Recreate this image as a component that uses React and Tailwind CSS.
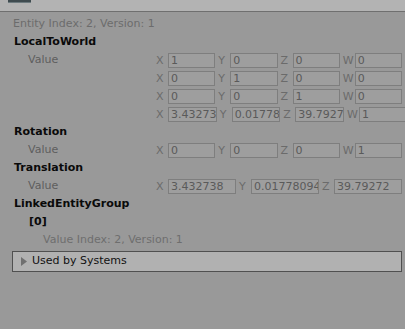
import React from "react";

const font = { fontFamily: '"DejaVu Sans", Verdana, sans-serif' };

function Field({ label, value }) {
  return (
    <div className="flex flex-1 items-center min-w-0">
      <div className="w-[12px] shrink-0 text-[#6b6b6b] leading-none">{label}</div>
      <div className="flex-1 min-w-0 h-[15px] border border-[#7e7e7e] bg-[#9e9e9e] text-[#5a5a5a] pl-[2px] overflow-hidden whitespace-nowrap leading-[13px]">
        {value}
      </div>
    </div>
  );
}

function FieldRow({ label, values }) {
  const names = ["X", "Y", "Z", "W"];
  return (
    <div className="flex h-[18px] items-center">
      <div className="w-[156px] shrink-0 pl-[28px] text-[#5e5e5e]">{label}</div>
      <div className="flex flex-1 gap-[3px] pr-[3px]">
        {values.map((v, i) => (
          <Field key={i} label={names[i]} value={v} />
        ))}
      </div>
    </div>
  );
}

function Row({ children, className = "" }) {
  return <div className={"flex h-[18px] items-center whitespace-nowrap " + className}>{children}</div>;
}

export default function App() {
  return (
    <div className="min-h-screen w-full bg-[#999999] text-[11px]" style={font}>
      <div className="h-[12px] bg-[#b3b3b3] border-b border-[#6f6f6f]">
        <div className="ml-[8px] w-[23px] h-[3px] bg-[#3f4b4f] border-b border-[#6d7a7e]" />
      </div>
      <div className="pt-[3px]">
        <Row className="pl-[13px] text-[#6c6c6c]">Entity Index: 2, Version: 1</Row>
        <Row className="pl-[14px] font-bold text-[#0a0a0a]">LocalToWorld</Row>
        <FieldRow label="Value" values={["1", "0", "0", "0"]} />
        <FieldRow label="" values={["0", "1", "0", "0"]} />
        <FieldRow label="" values={["0", "0", "1", "0"]} />
        <FieldRow label="" values={["3.432738", "0.01778094", "39.79272", "1"]} />
        <Row className="pl-[14px] font-bold text-[#0a0a0a]">Rotation</Row>
        <FieldRow label="Value" values={["0", "0", "0", "1"]} />
        <Row className="pl-[14px] font-bold text-[#0a0a0a]">Translation</Row>
        <FieldRow label="Value" values={["3.432738", "0.01778094", "39.79272"]} />
        <Row className="pl-[14px] font-bold text-[#0a0a0a]">LinkedEntityGroup</Row>
        <Row className="pl-[29px] font-bold text-[#0a0a0a]">[0]</Row>
        <Row className="pl-[43px] text-[#6e6e6e]">Value Index: 2, Version: 1</Row>
        <div className="mt-[2px] ml-[12px] mr-[3px] h-[21px] border border-[#505050] bg-[#b1b1b1] flex items-center">
          <svg width="6" height="9" viewBox="0 0 6 9" className="ml-[8px] mr-[5px]">
            <polygon points="0,0 6,4.5 0,9" fill="#707070" />
          </svg>
          <span className="text-[#111111]">Used by Systems</span>
        </div>
      </div>
    </div>
  );
}
